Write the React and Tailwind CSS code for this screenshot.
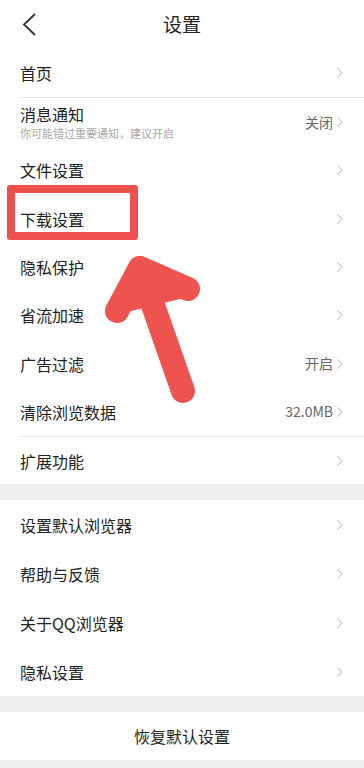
import React from 'react';

const font = { fontFamily: '"Noto Sans CJK SC", "Noto Sans", sans-serif' };

const Chevron = () => (
    <svg width="8" height="12" viewBox="0 0 8 12" className="ml-[3px] shrink-0">
        <path d="M1.5 1.5 L6 6 L1.5 10.5" fill="none" stroke="#cfcfcf" strokeWidth="1.3" />
    </svg>
);

const Row = ({ title, sub, value, h = 'h-[48.3px]' }) => (
    <div className={`${h} flex items-center pl-5 pr-[20px] bg-white`}>
        <div className="flex-1 flex flex-col justify-center">
            <span className="text-[16px] leading-[20px] text-[#222]">{title}</span>
            {sub && <span className="text-[11px] leading-[14px] mt-[2px] text-[#a8a8a8]">{sub}</span>}
        </div>
        {value && <span className="text-[14px] text-[#666]">{value}</span>}
        <Chevron />
    </div>
);

export default function App() {
    return (
        <div className="relative w-[364px] h-[768px] overflow-hidden bg-[#efefef]" style={font}>
            {/* Header */}
            <div className="h-[49px] bg-white flex items-center relative">
                <svg width="16" height="26" viewBox="0 0 16 26" className="absolute left-[21px] top-[12px]">
                    <path d="M14 2 L3 12.5 L14 23" fill="none" stroke="#333" strokeWidth="1.8" />
                </svg>
                <div className="flex-1 text-center text-[19px] text-[#222]">设置</div>
            </div>

            {/* Group 1 */}
            <div className="bg-white">
                <Row title="首页" h="h-12" />
                <div className="ml-5 h-px bg-[#e6e6e6]" />
                <Row title="消息通知" sub="你可能错过重要通知，建议开启" value="关闭" />
                <Row title="文件设置" />
                <Row title="下载设置" />
                <Row title="隐私保护" />
                <Row title="省流加速" />
                <Row title="广告过滤" value="开启" />
                <Row title="清除浏览数据" value="32.0MB" />
                <div className="ml-5 h-px bg-[#e6e6e6]" />
                <Row title="扩展功能" h="h-[47px]" />
            </div>

            <div className="h-4" />

            {/* Group 2 */}
            <div className="bg-white">
                <Row title="设置默认浏览器" h="h-[49px]" />
                <Row title="帮助与反馈" h="h-[49px]" />
                <Row title="关于QQ浏览器" h="h-[49px]" />
                <Row title="隐私设置" h="h-[49px]" />
            </div>

            <div className="h-4" />

            <div className="h-12 bg-white flex items-center justify-center text-[16px] text-[#222]">
                恢复默认设置
            </div>

            {/* Annotation overlay */}
            <div className="absolute left-[7px] top-[185px] w-[131px] h-[55px] border-[8px] border-[#ee5050] rounded-[3px] pointer-events-none" />
            <svg className="absolute left-0 top-0 pointer-events-none" width="364" height="768" viewBox="0 0 364 768">
                <g stroke="#ef5350" strokeWidth="24" strokeLinecap="round" strokeLinejoin="round" fill="#ef5350">
                    <path d="M117 311 L140 268 L188 289" fill="none" />
                    <path d="M140 268 L183 391" />
                    <path d="M125 300 L140 270 L178 287 Z" />
                </g>
            </svg>
        </div>
    );
}
